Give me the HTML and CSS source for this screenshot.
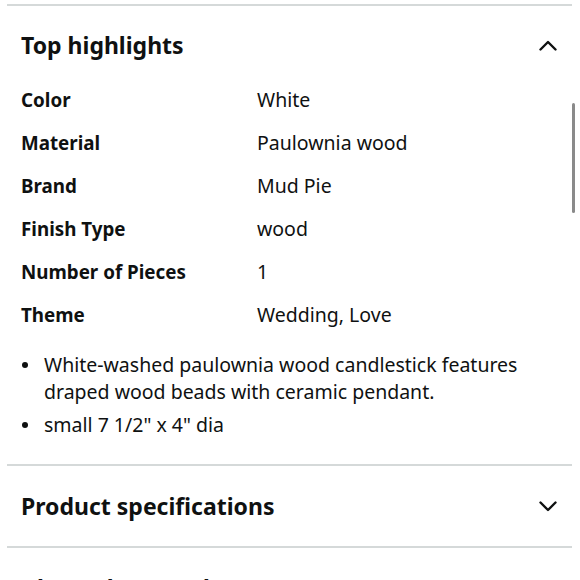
FILE: index.html
```html
<!DOCTYPE html>
<html>
<head>
<meta charset="utf-8">
<link rel="stylesheet" href="styles.css">
</head>
<body>
<div class="panel">
  <section class="section">
    <div class="section-head">
      <h2 class="title">Top highlights</h2>
      <svg class="chev" width="18" height="11" viewBox="0 0 18 11"><path d="M1.5 9.5 L9 2 L16.5 9.5" fill="none" stroke="#0f1111" stroke-width="2.4" stroke-linecap="round" stroke-linejoin="round"/></svg>
    </div>
    <div class="specs">
      <div class="row"><div class="label">Color</div><div class="value">White</div></div>
      <div class="row"><div class="label">Material</div><div class="value">Paulownia wood</div></div>
      <div class="row"><div class="label">Brand</div><div class="value">Mud Pie</div></div>
      <div class="row"><div class="label">Finish Type</div><div class="value">wood</div></div>
      <div class="row"><div class="label">Number of Pieces</div><div class="value">1</div></div>
      <div class="row"><div class="label">Theme</div><div class="value">Wedding, Love</div></div>
    </div>
    <ul class="bullets">
      <li><span class="dot"></span><span>White-washed paulownia wood candlestick features draped wood beads with ceramic pendant.</span></li>
      <li><span class="dot"></span><span>small 7 1/2" x 4" dia</span></li>
    </ul>
  </section>
  <section class="section">
    <div class="section-head">
      <h2 class="title">Product specifications</h2>
      <svg class="chev" width="18" height="11" viewBox="0 0 18 11"><path d="M1.5 1.5 L9 9 L16.5 1.5" fill="none" stroke="#0f1111" stroke-width="2.4" stroke-linecap="round" stroke-linejoin="round"/></svg>
    </div>
  </section>
  <section class="section">
    <div class="section-head">
      <h2 class="title">About the Brand</h2>
      <svg class="chev" width="18" height="11" viewBox="0 0 18 11"><path d="M1.5 1.5 L9 9 L16.5 1.5" fill="none" stroke="#0f1111" stroke-width="2.4" stroke-linecap="round" stroke-linejoin="round"/></svg>
    </div>
  </section>
  <div class="scrollbar"></div>
</div>
</body>
</html>
```
FILE: styles.css
```css
html, body {
  margin: 0;
  padding: 0;
  background: #ffffff;
  overflow: hidden;
}
body {
  font-family: "Noto Sans", "Open Sans", Arial, sans-serif;
  color: #0f1111;
}
.panel {
  position: relative;
  margin: 4px 8px 0 7px;
}
.section {
  border-top: 2px solid #d5d9d9;
}
.section-head {
  display: flex;
  justify-content: space-between;
  align-items: center;
  padding: 24px 15px 24px 14px;
}
.title {
  margin: 0;
  font-size: 23px;
  line-height: 32px;
  font-weight: 700;
}
.chev {
  display: block;
}
.section:first-child .section-head {
  padding-top: 23px;
  padding-bottom: 17px;
}
.specs {
  display: flex;
  flex-direction: column;
  padding: 0 14px;
}
.row {
  display: grid;
  grid-template-columns: 236px 1fr;
  height: 43px;
  align-items: center;
}
.label {
  font-weight: 700;
  font-size: 18.8px;
}
.value {
  font-size: 19.5px;
}
.bullets {
  list-style: none;
  margin: 15px 0 0;
  padding: 0 30px 26px 15px;
  font-size: 19.5px;
  line-height: 27px;
}
.bullets li {
  display: flex;
  gap: 16px;
  margin-bottom: 6px;
}
.bullets li:last-child {
  margin-bottom: 0;
}
.dot {
  flex: none;
  width: 6px;
  height: 6px;
  border-radius: 50%;
  background: #0f1111;
  margin-top: 11px;
}
.scrollbar {
  position: absolute;
  top: 99px;
  right: -3px;
  width: 3px;
  height: 110px;
  background: #8a8a8a;
  border-radius: 2px;
}
```
